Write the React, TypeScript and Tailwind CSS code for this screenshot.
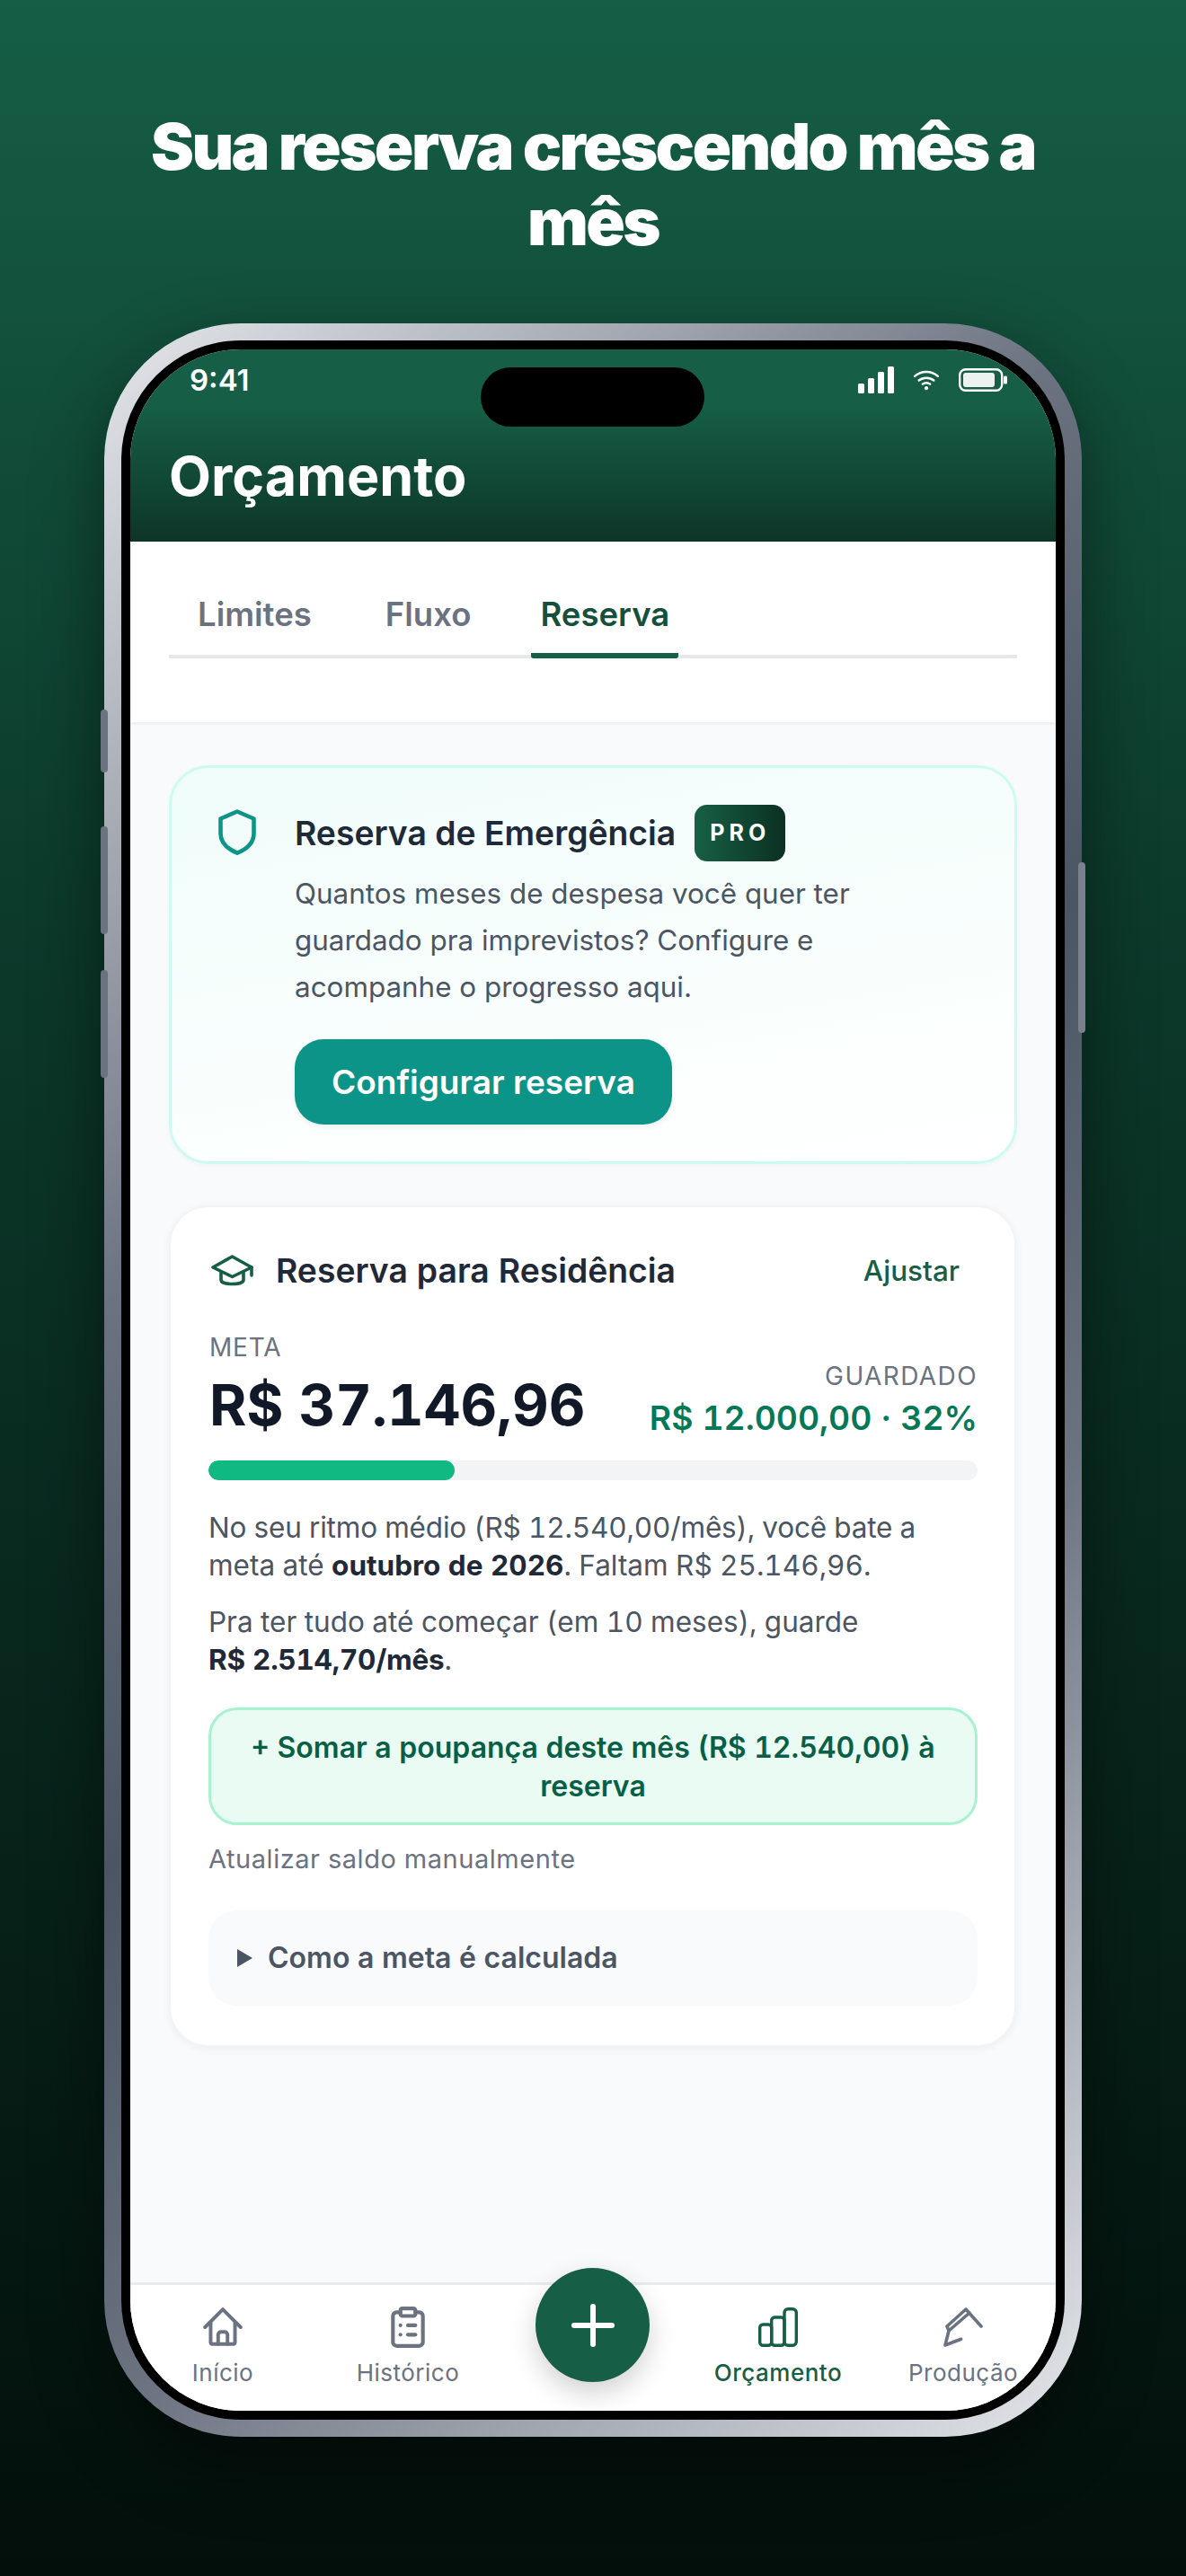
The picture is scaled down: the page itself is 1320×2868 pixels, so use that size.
import React from "react";
import { ClipboardList, Plus } from "lucide-react";

const font = "font-['Inter','Liberation_Sans',sans-serif]";

function NavItem({ icon, label, active }: { icon: React.ReactNode; label: string; active?: boolean }) {
  return (
    <div className={`flex flex-col items-center w-[206px] ${active ? "text-[#165e46]" : "text-[#6b7280]"}`}>
      <div className="h-[46px] flex items-center justify-center">{icon}</div>
      <div className={`mt-[12px] text-[26px] leading-[32px] tracking-[0.5px] ${active ? "font-medium" : ""}`}>{label}</div>
    </div>
  );
}

function HomeIcon() {
  return (
    <svg width="50" height="50" viewBox="0 0 24 24" fill="none" stroke="currentColor" strokeWidth="1.9" strokeLinecap="round" strokeLinejoin="round">
      <path d="M2.5 12 12 2.5 21.5 12" />
      <path d="M5.5 9.5V20a1 1 0 0 0 1 1h11a1 1 0 0 0 1-1V9.5" />
      <path d="M9.5 21v-5a1.5 1.5 0 0 1 1.5-1.5h2a1.5 1.5 0 0 1 1.5 1.5v5" />
    </svg>
  );
}

function BarsIcon() {
  return (
    <svg width="44" height="44" viewBox="0 0 44 44" fill="none" stroke="currentColor" strokeWidth="3.4" strokeLinejoin="round">
      <rect x="1.7" y="19" width="13" height="23.3" rx="3.5" />
      <rect x="14.7" y="11" width="14.3" height="31.3" rx="3.5" />
      <rect x="29" y="1.7" width="13.3" height="40.6" rx="4" />
    </svg>
  );
}

function PenIcon() {
  return (
    <svg width="44" height="44" viewBox="0 0 44 44" fill="none" stroke="currentColor" strokeWidth="3.6" strokeLinecap="round" strokeLinejoin="round">
      <path d="M42 21 25 2 4 21l2 5L29 6" />
      <path d="M6 26 2 42l17.6-6.7" />
    </svg>
  );
}

function CapIcon() {
  return (
    <svg width="49" height="36" viewBox="0 0 49 36" fill="none" stroke="currentColor" strokeWidth="3.6" strokeLinecap="round" strokeLinejoin="round" className="text-[#165e46]">
      <path d="M24.5 2 46 14 24.5 24.5 3 14Z" />
      <path d="M12 19.5V28c0 6 25 6 25 0v-8.5" />
      <path d="M46 14v9" />
    </svg>
  );
}

function ShieldIcon() {
  return (
    <svg width="56" height="56" viewBox="0 0 56 56" fill="none" stroke="currentColor" strokeWidth="4.6" strokeLinejoin="round" className="mt-[3px] shrink-0 text-[#0d9488]">
      <path d="M28 4.500 46.500 12.500V29C46.500 40 37 47 28 50.700 19 47 9.500 40 9.500 29V12.500Z" />
    </svg>
  );
}

export default function App() {
  return (
    <div className={`${font} w-[1320px] h-[2868px] overflow-hidden relative bg-[linear-gradient(180deg,#165e46_0%,#0c3a2b_35%,#030f0b_100%)]`}>
      <div className="relative flex flex-col items-center">
        <h1 className="mt-[121px] w-[1040px] text-center text-white text-[72px] leading-[84px] font-black tracking-[-2.6px]">
          Sua reserva crescendo mês a mês
        </h1>
        <div className="relative mt-[71px] w-[1088px] h-[2353px] rounded-[152px] p-[19px] bg-[linear-gradient(135deg,#e5e7eb_0%,#6b7280_32%,#4b5563_50%,#6b7280_68%,#e5e7eb_100%)] shadow-[0_30px_80px_rgba(0,0,0,0.45)]">
          <div className="absolute left-[-4px] top-[430px] w-[8px] h-[70px] rounded-[4px] bg-[#6b7280]" />
          <div className="absolute left-[-4px] top-[560px] w-[8px] h-[120px] rounded-[4px] bg-[#6b7280]" />
          <div className="absolute left-[-4px] top-[720px] w-[8px] h-[120px] rounded-[4px] bg-[#6b7280]" />
          <div className="absolute right-[-4px] top-[600px] w-[8px] h-[190px] rounded-[4px] bg-[#7b818c]" />
          <div className="w-full h-full rounded-[133px] bg-black p-[10px]">
            <div className="relative w-full h-full rounded-[123px] overflow-hidden bg-[#f9fafb] flex flex-col">
              <div className="h-[214px] shrink-0 bg-[linear-gradient(180deg,#165e46_0%,#165e46_30%,#0d3528_100%)] px-[44px] relative">
                <div className="flex justify-between items-start pt-[12px]">
                  <div className="text-white text-[33px] leading-[44px] font-semibold ml-[22px]">9:41</div>
                  <div className="flex items-center gap-[20px] mt-[7px] mr-[10px] text-white">
                    <svg width="40" height="30" viewBox="0 0 40 30" fill="currentColor">
                      <rect x="0" y="19" width="7" height="11" rx="1.5" />
                      <rect x="11" y="13" width="7" height="17" rx="1.5" />
                      <rect x="22" y="6" width="7" height="24" rx="1.5" />
                      <rect x="33" y="0" width="7" height="30" rx="1.5" />
                    </svg>
                    <svg width="32" height="24" viewBox="0 0 32 26" fill="none" stroke="currentColor" strokeWidth="2.6" strokeLinecap="round">
                      <path d="M2 8.500C10 1.500 22 1.500 30 8.500" />
                      <path d="M7 13.500c5-4 13-4 18 0" />
                      <path d="M11.500 18c3-2 6-2 9 0" />
                      <circle cx="16" cy="23" r="2.300" fill="currentColor" stroke="none" />
                    </svg>
                    <svg width="54" height="26" viewBox="0 0 54 26" fill="none">
                      <rect x="1.200" y="1.200" width="47" height="23.600" rx="6.500" stroke="currentColor" strokeWidth="2.400" />
                      <rect x="5" y="5" width="35" height="16" rx="3" fill="currentColor" opacity="0.92" />
                      <rect x="50" y="8.500" width="4" height="9" rx="1.500" fill="currentColor" />
                    </svg>
                  </div>
                </div>
                <div className="absolute left-[390px] top-[20px] w-[249px] h-[66px] rounded-[33px] bg-black" />
                <div className="text-white text-[61px] leading-[70px] font-bold mt-[50px] -ml-[1px]">Orçamento</div>
              </div>
              <div className="h-[204px] shrink-0 bg-white px-[43px] border-b-[3px] border-[#f0f1f3]">
                <div className="h-[130px] border-b-[4px] border-[#e5e7eb] flex items-end">
                  <div className="flex h-full items-end text-[36.5px] leading-[44px] font-semibold text-[#6b7280]">
                    <div className="ml-[32px] pb-[27px] mb-[-4px]">Limites</div>
                    <div className="ml-[82px] pb-[27px] mb-[-4px]">Fluxo</div>
                    <div className="ml-[67px] pb-[21px] mb-[-4px] w-[164px] text-center text-[#14503c] border-b-[6px] border-[#165e46] rounded-[3px]">Reserva</div>
                  </div>
                </div>
              </div>
              <div className="flex-1 px-[43px] pt-[45px] flex flex-col">
                <div className="rounded-[44px] border-[3px] border-[#ccfbf1] bg-[linear-gradient(170deg,#f0fdfa_0%,#ffffff_100%)] pl-[45px] pt-[41px] pb-[41px] flex shadow-[0_2px_6px_rgba(0,0,0,0.03)]">
                  <ShieldIcon />
                  <div className="ml-[36px] flex-1">
                    <div className="flex items-center h-[63px]">
                      <span className="text-[37.3px] leading-[46px] font-semibold text-[#1f2937]">Reserva de Emergência</span>
                      <span className="ml-[21px] w-[101px] h-[63px] rounded-[14px] bg-[linear-gradient(90deg,#176046,#0c3023)] text-white text-[25px] font-bold tracking-[5px] flex items-center justify-center">PRO</span>
                    </div>
                    <p className="mt-[10px] text-[31.4px] leading-[52px] text-[#4b5563] w-[690px]">
                      Quantos meses de despesa você quer ter guardado pra imprevistos? Configure e acompanhe o progresso aqui.
                    </p>
                    <div className="mt-[32px] w-[420px] h-[95px] rounded-[32px] bg-[#0d9488] text-white text-[37px] font-semibold flex items-center justify-center shadow-[0_2px_6px_rgba(0,0,0,0.08)]">Configurar reserva</div>
                  </div>
                </div>
                <div className="mt-[46px] mr-[1px] rounded-[44px] bg-white border-[2px] border-[#f3f4f6] shadow-[0_2px_10px_rgba(0,0,0,0.05)] pl-[42px] pr-[41px] pt-[39px] pb-[44px] tabular-nums">
                  <div className="flex items-center justify-between h-[64px]">
                    <div className="flex items-center">
                      <span className="ml-[2px]"><CapIcon /></span>
                      <span className="ml-[24px] text-[37.3px] font-semibold text-[#1f2937]">Reserva para Residência</span>
                    </div>
                    <span className="mr-[20px] text-[31.5px] font-medium text-[#165e46]">Ajustar</span>
                  </div>
                  <div className="mt-[35px] flex justify-between">
                    <div className="ml-[1px]">
                      <div className="text-[28px] leading-[36px] text-[#6b7280] tracking-[0.8px]">META</div>
                      <div className="mt-[8px] text-[63px] leading-[76px] font-bold text-[#111827]">R$ 37.146,96</div>
                    </div>
                    <div className="text-right pt-[32px]">
                      <div className="text-[28px] leading-[36px] text-[#6b7280] tracking-[1.4px]">GUARDADO</div>
                      <div className="mt-[6px] text-[37.3px] leading-[46px] font-semibold text-[#047857]">R$ 12.000,00 · 32%</div>
                    </div>
                  </div>
                  <div className="mt-[24px] h-[22px] rounded-full bg-[#f3f4f6] overflow-hidden">
                    <div className="h-full w-[32%] rounded-full bg-[#10b981]" />
                  </div>
                  <p className="mt-[32px] text-[31.5px] leading-[42px] text-[#4b5563]">
                    <span className="tracking-[-0.17px]">No seu ritmo médio (R$ 12.540,00/mês), você bate a</span> meta até <b className="font-bold text-[#1f2937]">outubro de 2026</b>. Faltam R$ 25.146,96.
                  </p>
                  <p className="mt-[21px] text-[31.5px] leading-[42px] text-[#4b5563]">
                    Pra ter tudo até começar (em 10 meses), guarde<br /><b className="font-bold text-[#1f2937] tracking-[-0.25px]">R$ 2.514,70/mês</b>.
                  </p>
                  <div className="mt-[32px] h-[131px] rounded-[32px] border-[3px] border-[#a7f3d0] bg-[#e9fbf3] flex items-center justify-center text-center px-[30px] text-[32px] leading-[43px] font-semibold text-[#065f46]">
                    + Somar a poupança deste mês (R$ 12.540,00) à reserva
                  </div>
                  <div className="mt-[20px] text-[29px] leading-[36px] text-[#6b7280] tracking-[0.55px]">Atualizar saldo manualmente</div>
                  <div className="mt-[39px] h-[106px] rounded-[32px] bg-[#f9fafb] flex items-center pl-[32px] text-[32px] font-semibold text-[#4b5563]">
                    <svg width="17" height="20" viewBox="0 0 17 20" fill="currentColor" className="mr-[17px]"><path d="M0 0 17 10 0 20Z" /></svg>
                    Como a meta é calculada
                  </div>
                </div>
              </div>
              <div className="h-[143px] shrink-0 bg-white border-t-[3px] border-[#e9ebef] flex pt-[24px] relative">
                <NavItem icon={<HomeIcon />} label="Início" />
                <NavItem icon={<ClipboardList size={50} strokeWidth={2} />} label="Histórico" />
                <div className="w-[206px]" />
                <NavItem active icon={<BarsIcon />} label="Orçamento" />
                <NavItem icon={<PenIcon />} label="Produção" />
                <div className="absolute left-[451px] top-[-19px] w-[127px] h-[127px] rounded-full bg-[#165e46] flex items-center justify-center shadow-[0_12px_30px_rgba(0,0,0,0.18)] text-white">
                  <Plus size={72} strokeWidth={2} />
                </div>
              </div>
            </div>
          </div>
        </div>
      </div>
    </div>
  );
}
